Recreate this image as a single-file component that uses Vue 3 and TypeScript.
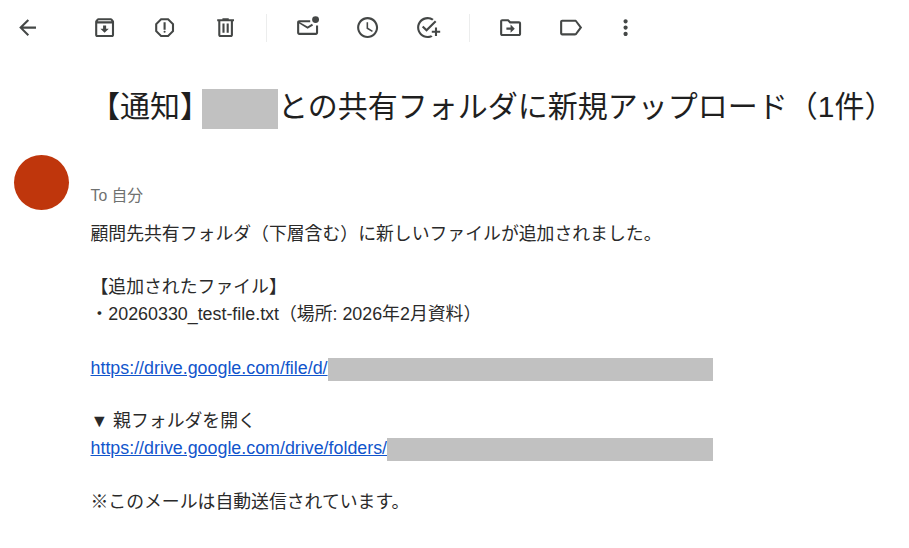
<script setup lang="ts">
const groupA: string[] = [
  'M20.54 5.23l-1.39-1.68C18.88 3.21 18.47 3 18 3H6c-.47 0-.88.21-1.16.55L3.46 5.23C3.17 5.57 3 6.02 3 6.5V19c0 1.1.9 2 2 2h14c1.1 0 2-.9 2-2V6.5c0-.48-.17-.93-.46-1.27zM6.24 5h11.52l.81.97H5.44l.8-.97zM5 19V8h14v11H5zm8.45-9h-2.9v3H8l4 4 4-4h-2.55z',
  'M15.73 3H8.27L3 8.27v7.46L8.27 21h7.46L21 15.73V8.27L15.73 3zM19 14.9L14.9 19H9.1L5 14.9V9.1L9.1 5h5.8L19 9.1v5.8zM12 17a1 1 0 1 0 0-2 1 1 0 0 0 0 2zm-1-10h2v7h-2z',
  'M15 4V3H9v1H4v2h1v13c0 1.1.9 2 2 2h10c1.1 0 2-.9 2-2V6h1V4h-5zm2 15H7V6h10v13zM9 8h2v9H9zm4 0h2v9h-2z',
]
const groupB: string[] = [
  'M14.5 5H4C2.9 5 2 5.9 2 7v10c0 1.1.9 2 2 2h16c1.1 0 2-.9 2-2v-7h-2v7H4V8.2l8 5 5.2-3.2-1-1.7-4.2 2.6L4.6 7h9.9V5zM19.6 1.1a3.3 3.3 0 1 1 0 6.6 3.3 3.3 0 0 1 0-6.6z',
  'M11.99 2C6.47 2 2 6.48 2 12s4.47 10 9.99 10C17.52 22 22 17.52 22 12S17.52 2 11.99 2zM12 20c-4.42 0-8-3.58-8-8s3.58-8 8-8 8 3.58 8 8-3.58 8-8 8zm.5-13H11v6l5.25 3.15.75-1.23-4.5-2.67V7z',
  'M12 20c-4.41 0-8-3.59-8-8s3.59-8 8-8c1.6 0 3.09.47 4.34 1.28l1.45-1.45A9.9 9.9 0 0 0 12 2C6.48 2 2 6.48 2 12s4.48 10 10 10c1.73 0 3.36-.44 4.78-1.22l-1.5-1.5c-1 .46-2.11.72-3.28.72zm7-5h-3v2h3v3h2v-3h3v-2h-3v-3h-2v3zm1.41-8.41L11 16l-4.41-4.41 1.41-1.41 3 3 8-8 1.41 1.41z',
]
const groupC: string[] = [
  'M20 6H12l-2-2H4c-1.1 0-2 .9-2 2v12c0 1.1.9 2 2 2h16c1.1 0 2-.9 2-2V8c0-1.1-.9-2-2-2zm0 12H4V6h5.17l2 2H20v10zm-8-1l4-4-4-4v3H8v2h4v3z',
  'M17.63 4.9C17.27 4.6 16.67 4.5 16 4.5H4c-1.1 0-2 .9-2 2v11c0 1.1.9 2 2 2h12c.67 0 1.27-.1 1.63-.4L23 12l-5.37-7.1zM16.5 17.5H4v-11h12.5l4 5.5-4 5.5z',
  'M12 8c1.1 0 2-.9 2-2s-.9-2-2-2-2 .9-2 2 .9 2 2 2zm0 2c-1.1 0-2 .9-2 2s.9 2 2 2 2-.9 2-2-.9-2-2-2zm0 6c-1.1 0-2 .9-2 2s.9 2 2 2 2-.9 2-2-.9-2-2-2z',
]
</script>

<template>
  <main class="page">
    <nav class="toolbar">
      <button class="back" aria-label="戻る">
        <svg viewBox="0 0 24 24" class="icon"><path d="M20 11H7.83l5.59-5.59L12 4l-8 8 8 8 1.41-1.41L7.83 13H20v-2z" /></svg>
      </button>
      <div class="group first">
        <svg v-for="d in groupA" :key="d" viewBox="0 0 24 24" class="icon"><path :d="d" /></svg>
      </div>
      <span class="divider"></span>
      <div class="group second">
        <svg v-for="d in groupB" :key="d" viewBox="0 0 24 24" class="icon"><path :d="d" /></svg>
      </div>
      <span class="divider"></span>
      <div class="group third">
        <svg v-for="d in groupC" :key="d" viewBox="0 0 24 24" class="icon"><path :d="d" /></svg>
      </div>
    </nav>

    <h1 class="subject">【通知】<span class="mask subject-mask"></span>との共有フォルダに新規アップロード（1件）</h1>

    <section class="message">
      <div class="avatar"></div>
      <div class="content">
        <div class="to">To 自分</div>
        <div class="body">
          <p>顧問先共有フォルダ（下層含む）に新しいファイルが追加されました。</p>
          <p>【追加されたファイル】<br />・20260330_test-file.txt（場所: 2026年2月資料）</p>
          <p><a href="#">https://drive.google.com/file/d/</a><span class="mask link-mask-a"></span></p>
          <p>▼ 親フォルダを開く<br /><a href="#">https://drive.google.com/drive/folders/</a><span class="mask link-mask-b"></span></p>
          <p>※このメールは自動送信されています。</p>
        </div>
      </div>
    </section>
  </main>
</template>

<style>
html, body { margin: 0; background: #fff; }
</style>

<style scoped>
.page {
  width: 909px;
  height: 548px;
  overflow: hidden;
  background: #fff;
  font-family: "Liberation Sans", "Noto Sans CJK JP", sans-serif;
  color: #222;
}
.toolbar {
  display: flex;
  align-items: center;
  height: 56px;
  padding-left: 15px;
}
.back { border: 0; background: none; padding: 0; display: flex; }
.icon { width: 25.2px; height: 25.2px; fill: #444746; flex: none; }
.group { display: flex; gap: 35.3px; }
.first { margin-left: 51.4px; }
.second { gap: 35px; }
.third { gap: 34.8px; }
.third .icon:last-child { margin-left: -5.4px; }
.divider { width: 1px; height: 28px; background: #eceded; margin: 0 28.2px; }
.subject {
  margin: 30px 0 0;
  padding-left: 90px;
  font-size: 30px;
  font-weight: 400;
  line-height: 42px;
  color: #1f1f1f;
  white-space: nowrap;
  font-family: "Liberation Sans", "Noto Sans CJK JP", sans-serif;
}
.mask { display: inline-block; background: #c1c1c1; vertical-align: middle; }
.subject-mask { width: 76px; height: 40px; margin-left: -8px; }
.message { display: flex; margin-top: 26px; padding-left: 14px; }
.avatar { width: 55px; height: 55px; border-radius: 50%; background: #bf360c; flex: none; }
.content { margin-left: 21.5px; }
.to { margin-top: 33px; font-size: 15.75px; line-height: 16px; color: #6f7170; }
.body { margin-top: 16.5px; font-size: 17.85px; line-height: 26.8px; color: #2a2a2a; white-space: nowrap; }
.body p { margin: 0 0 26.8px; }
.body a { color: #1155cc; }
.link-mask-a { width: 385px; height: 23px; position: relative; top: 1px; }
.link-mask-b { width: 326px; height: 23px; }
</style>
